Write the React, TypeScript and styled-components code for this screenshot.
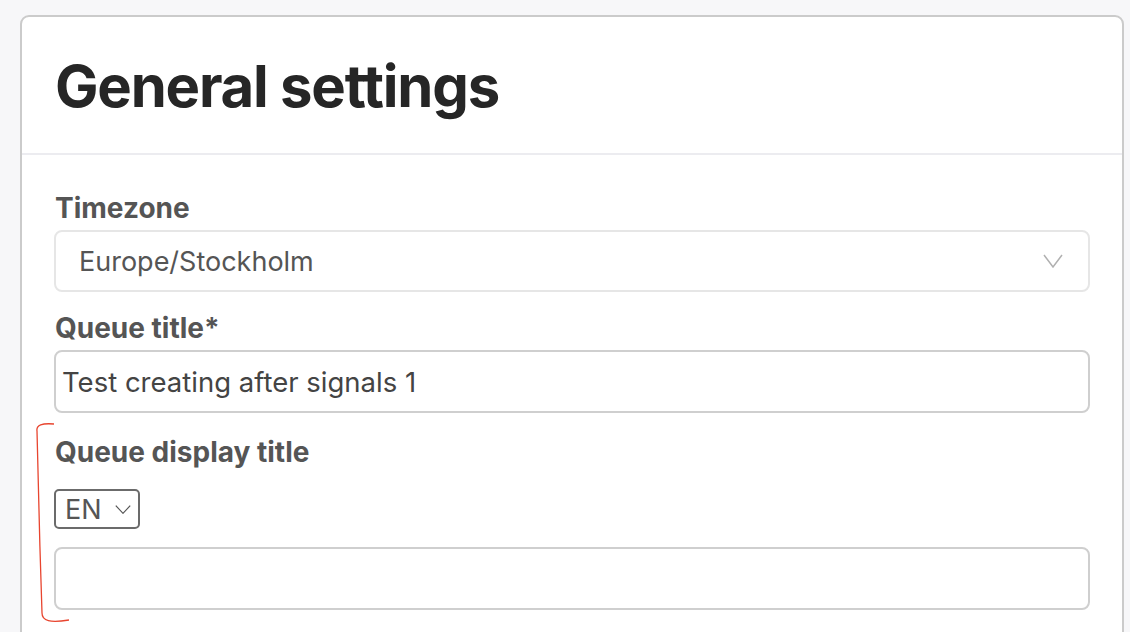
import styled, { createGlobalStyle } from "styled-components";

const GlobalStyle = createGlobalStyle`
    html, body {
        margin: 0;
        padding: 0;
        background: #f7f7f9;
        font-family: Inter, "Noto Sans", sans-serif;
    }
    * {
        box-sizing: border-box;
    }
`;

function Chevron({ w, h, color }: { w: number; h: number; color: string }) {
    return (
        <svg width={w} height={h} viewBox="0 0 20 14" fill="none" preserveAspectRatio="none">
            <path d="M1 1 L10 13 L19 1" stroke={color} strokeWidth="1.5" />
        </svg>
    );
}

export default function App() {
    return (
        <>
            <GlobalStyle />
            <Page>
                <Card>
                    <Header>
                        <Title>General settings</Title>
                    </Header>
                    <Body>
                        <Field>
                            <Label>Timezone</Label>
                            <SelectBox>
                                <span>Europe/Stockholm</span>
                                <Chevron w={20} h={14} color="#b0b0b0" />
                            </SelectBox>
                        </Field>
                        <Field $gap={19}>
                            <Label>Queue title*</Label>
                            <TextInput defaultValue="Test creating after signals 1" />
                        </Field>
                        <Field $gap={22}>
                            <Mark width="40" height="204" viewBox="0 0 40 204">
                                <path
                                    d="M34 1 C22 0 16 2 17 8 C18 60 20 130 22 190 C22 198 30 200 49 197"
                                    stroke="#e8452f"
                                    strokeWidth="1.3"
                                    fill="none"
                                />
                            </Mark>
                            <Label>Queue display title</Label>
                            <LangSelect>
                                <span>EN</span>
                                <Chevron w={16} h={9} color="#555" />
                            </LangSelect>
                            <TextInput $top={18} />
                        </Field>
                    </Body>
                </Card>
            </Page>
        </>
    );
}

const Page = styled.div`
    padding: 15px 6px 0 20px;
    height: 632px;
    overflow: hidden;
`;

const Card = styled.div`
    background: #fff;
    border: 2px solid #cbcbcb;
    border-radius: 9px;
    min-height: 700px;
`;

const Header = styled.div`
    padding: 32px 33px 29px;
    border-bottom: 2px solid #ececf0;
`;

const Title = styled.h1`
    margin: 0;
    font-size: 58px;
    line-height: 75px;
    font-weight: 700;
    color: #262626;
    letter-spacing: -1.2px;
`;

const Body = styled.div`
    padding: 36px 32px 0 32px;
`;

const Field = styled.div<{ $gap?: number }>`
    position: relative;
    display: flex;
    flex-direction: column;
    align-items: flex-start;
    margin-top: ${(p) => p.$gap ?? 0}px;
`;

const Label = styled.label`
    display: block;
    font-size: 28px;
    line-height: 34px;
    font-weight: 700;
    color: #555;
    margin: 0 0 5px 1px;
`;

const SelectBox = styled.div`
    width: 100%;
    height: 62px;
    display: flex;
    align-items: center;
    justify-content: space-between;
    padding: 0 25px 0 23px;
    border: 2px solid #e6e6e6;
    border-radius: 8px;
    font-size: 27px;
    color: #555;
`;

const TextInput = styled.input<{ $top?: number }>`
    display: block;
    width: 100%;
    height: 63px;
    margin: ${(p) => p.$top ?? 0}px 0 0;
    padding: 0 6px;
    border: 2px solid #cfcfcf;
    border-radius: 8px;
    font-family: inherit;
    font-size: 27.5px;
    color: #444;
    background: #fff;
    outline: none;
`;

const LangSelect = styled.div`
    display: flex;
    align-items: center;
    gap: 13px;
    height: 40px;
    margin-top: 15px;
    padding: 0 7px 0 9px;
    border: 2px solid #6b6b6b;
    border-radius: 5px;
    font-size: 27px;
    color: #555;
`;

const Mark = styled.svg`
    position: absolute;
    left: -34px;
    top: -12px;
    overflow: visible;
`;
